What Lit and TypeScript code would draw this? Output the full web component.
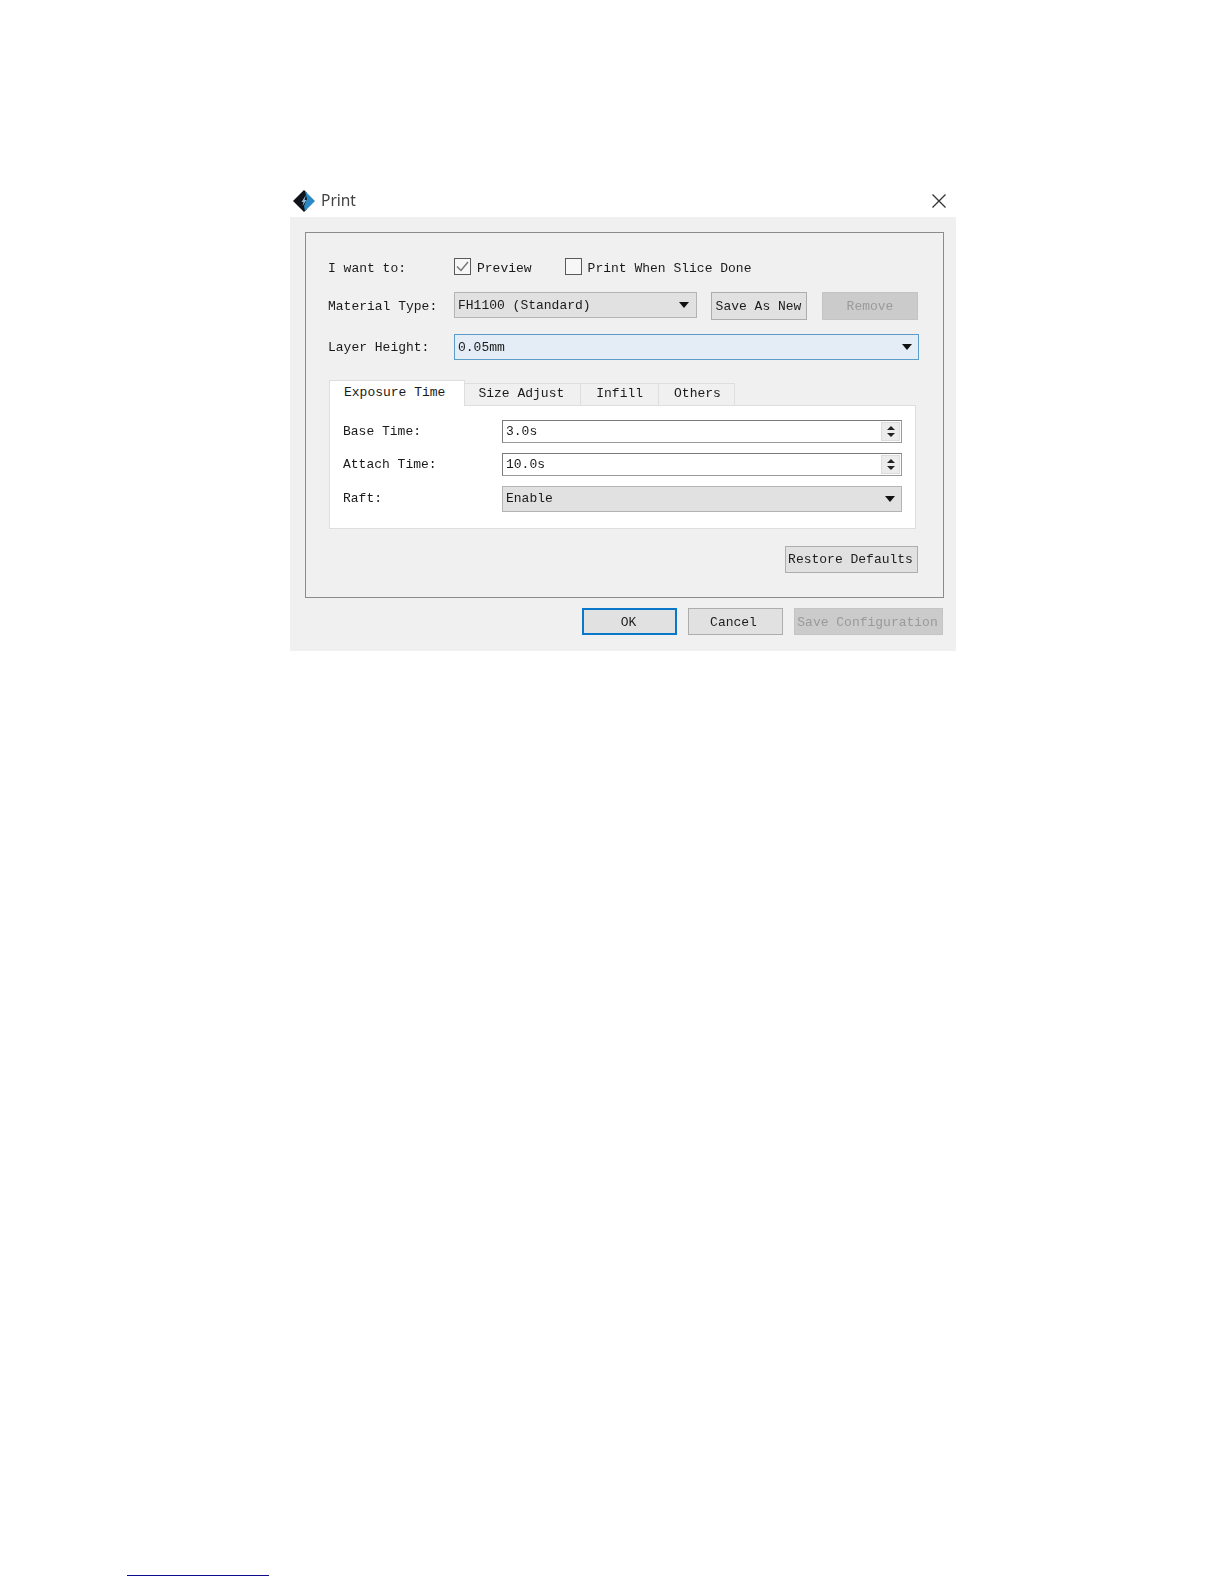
import { LitElement, html, css, svg } from "lit";
import { customElement } from "lit/decorators.js";

const arrow = () => html`<svg width="10" height="6" viewBox="0 0 10 6"><path d="M0 0H10L5 6Z" fill="#111"/></svg>`;

const logo = svg`<svg width="22" height="22" viewBox="0 0 22 22">
  <path d="M11 0L0 11L11 22L14 19V3Z" fill="#10141a"/>
  <path d="M12 1L22 11L12 21L11 16L14 9Z" fill="#2b8ac6"/>
  <path d="M13 5L8.5 12L10.5 12L9.5 16L13.5 10L11.5 10Z" fill="#8fc0de"/>
</svg>`;

@customElement("app-root")
export class AppRoot extends LitElement {
  static styles = css`
    :host {
      display: block;
      width: 1224px;
      height: 1584px;
      background: #fff;
      overflow: hidden;
    }
    * { box-sizing: border-box; }
    .page {
      height: 1584px;
      padding: 188px 0 0 0;
      display: flex;
      flex-direction: column;
      font: 13px/16px "Liberation Mono", monospace;
      color: #1a1a1a;
    }
    .dialog { width: 666px; margin-left: 290px; filter: blur(0.3px); }
    .title {
      height: 29px;
      display: flex;
      align-items: center;
      padding: 0 9px 6px 3px;
      gap: 6px;
    }
    .title .name {
      font: 15.5px/20px "Noto Sans", sans-serif;
      color: #444;
      flex: 1;
      margin-top: 1px;
    }
    .title svg { margin-top: 2px; }
    .body {
      height: 434px;
      background: #f0f0f0;
      padding: 15px 12px 0 15px;
    }
    .group {
      height: 366px;
      border: 1px solid #8c8c8c;
      padding: 25px 24px 0 22px;
    }
    .row { display: flex; align-items: center; }
    .lbl { width: 126px; flex: none; }
    .r1 { height: 17px; }
    .r1 .lbl, .t { padding-top: 4px; }
    .r2 { height: 28px; margin-top: 17px; align-items: flex-start; }
    .r2 .lbl { line-height: 26px; margin-top: 2px; }
    .r3 { height: 26px; margin-top: 14px; }
    .r3 .lbl { padding-top: 2px; }
    .check { display: flex; align-items: center; gap: 6px; }
    .check + .check { margin-left: 33px; }
    .box {
      width: 17px; height: 17px;
      border: 1px solid #5a5a5a;
      background: #f7f7f7;
      display: flex; align-items: center; justify-content: center;
    }
    .combo {
      height: 26px;
      background: #e1e1e1;
      border: 1px solid #b4b4b4;
      padding: 0 6px 0 3px;
      display: flex;
      align-items: center;
      justify-content: space-between;
    }
    .c-mat { width: 243px; padding-right: 7px; }
    .c-lay { flex: 1; background: #e4edf5; border: 1px solid #5a9dc8; }
    .c-mat span, .c-lay span { padding-top: 2px; }
    .btn {
      height: 28px;
      background: #e1e1e1;
      border: 1px solid #adadad;
      display: flex; align-items: center; justify-content: center;
      white-space: nowrap;
      color: #1c1c1c;
      padding-top: 2px;
    }
    .b-new { width: 96px; margin-left: 14px; padding-right: 1px; }
    .b-rem { width: 96px; margin-left: 15px; }
    .dis { background: #cbcbcb; border-color: #c4c4c4; color: #9a9a9a; }
    .tabs-wrap { margin: 19px 0 0 1px; width: 587px; }
    .tabs { display: flex; align-items: flex-end; height: 26px; }
    .tab {
      height: 22px;
      padding: 0 15px 2px;
      background: #f0f0f0;
      border: 1px solid #dedede;
      border-bottom: none;
      border-left: none;
      display: flex; align-items: center;
      white-space: nowrap;
    }
    .tab.size { padding-left: 13px; padding-right: 16px; }
    .tab.others { padding-right: 13px; }
    .tab.on {
      height: 26px;
      padding: 0 19px 1px 14px;
      background: #fff;
      border-left: 1px solid #dedede;
      position: relative;
      z-index: 1;
      margin-bottom: -1px;
    }
    .pane {
      height: 124px;
      background: #fff;
      border: 1px solid #dedede;
      padding: 14px 13px 0 13px;
    }
    .pane .lbl { width: 159px; }
    .p-row { display: flex; align-items: center; height: 23px; }
    .p-row + .p-row { margin-top: 10px; }
    .p-row.tall { height: 26px; }
    .input {
      flex: 1; height: 23px;
      background: #fff;
      border: 1px solid #999;
      border-top-color: #7a7a7a;
      border-left-color: #7a7a7a;
      display: flex; align-items: center;
      justify-content: space-between;
      padding: 0 1px 0 3px;
    }
    .spin {
      width: 19px; height: 19px;
      display: flex; flex-direction: column;
      justify-content: center; align-items: center;
      gap: 3px;
      background: #ececec;
      border: 1px solid #dcdcdc;
    }
    .spin svg { display: block; }
    .p-row .combo { flex: 1; }
    .restore-row { display: flex; justify-content: flex-end; margin-top: 17px; margin-right: 1px; }
    .b-res { width: 133px; height: 27px; padding-right: 2px; padding-top: 0; }
    .foot {
      display: flex;
      justify-content: flex-end;
      gap: 11px;
      margin: 10px 1px 0 0;
    }
    .foot .btn { height: 27px; }
    .b-ok { width: 95px; border: 2px solid #0a78c8; padding-right: 2px; }
    .b-can { width: 95px; padding-right: 4px; }
    .b-save { width: 149px; padding-right: 2px; }
    .rule {
      width: 142px;
      height: 1px;
      background: #0c0c8c;
      margin: 924px 0 0 127px;
    }
  `;

  private spin() {
    return html`<span class="spin">
      <svg width="8" height="4" viewBox="0 0 8 4"><path d="M4 0L8 4H0Z" fill="#222"/></svg>
      <svg width="8" height="4" viewBox="0 0 8 4"><path d="M0 0H8L4 4Z" fill="#222"/></svg>
    </span>`;
  }

  render() {
    return html`
      <div class="page">
        <div class="dialog">
          <div class="title">
            ${logo}
            <span class="name">Print</span>
            <svg width="16" height="16" viewBox="0 0 16 16"><path d="M1.5 1.5L14.5 14.5M14.5 1.5L1.5 14.5" stroke="#333" stroke-width="1.3" fill="none"/></svg>
          </div>
          <div class="body">
            <div class="group">
              <div class="row r1">
                <span class="lbl">I want to:</span>
                <label class="check">
                  <span class="box"><svg width="13" height="11" viewBox="0 0 13 11"><path d="M1 5.5L5 9.5L12 1" stroke="#777" stroke-width="1.5" fill="none"/></svg></span>
                  <span class="t">Preview</span>
                </label>
                <label class="check"><span class="box"></span><span class="t">Print When Slice Done</span></label>
              </div>
              <div class="row r2">
                <span class="lbl">Material Type:</span>
                <div class="combo c-mat"><span>FH1100 (Standard)</span>${arrow()}</div>
                <div class="btn b-new">Save As New</div>
                <div class="btn b-rem dis">Remove</div>
              </div>
              <div class="row r3">
                <span class="lbl">Layer Height:</span>
                <div class="combo c-lay"><span>0.05mm</span>${arrow()}</div>
              </div>
              <div class="tabs-wrap">
                <div class="tabs">
                  <div class="tab on">Exposure Time</div>
                  <div class="tab size">Size Adjust</div>
                  <div class="tab">Infill</div>
                  <div class="tab others">Others</div>
                </div>
                <div class="pane">
                  <div class="p-row"><span class="lbl">Base Time:</span><div class="input"><span>3.0s</span>${this.spin()}</div></div>
                  <div class="p-row"><span class="lbl">Attach Time:</span><div class="input"><span>10.0s</span>${this.spin()}</div></div>
                  <div class="p-row tall"><span class="lbl">Raft:</span><div class="combo"><span>Enable</span>${arrow()}</div></div>
                </div>
              </div>
              <div class="restore-row"><div class="btn b-res">Restore Defaults</div></div>
            </div>
            <div class="foot">
              <div class="btn b-ok">OK</div>
              <div class="btn b-can">Cancel</div>
              <div class="btn b-save dis">Save Configuration</div>
            </div>
          </div>
        </div>
        <div class="rule"></div>
      </div>
    `;
  }
}
